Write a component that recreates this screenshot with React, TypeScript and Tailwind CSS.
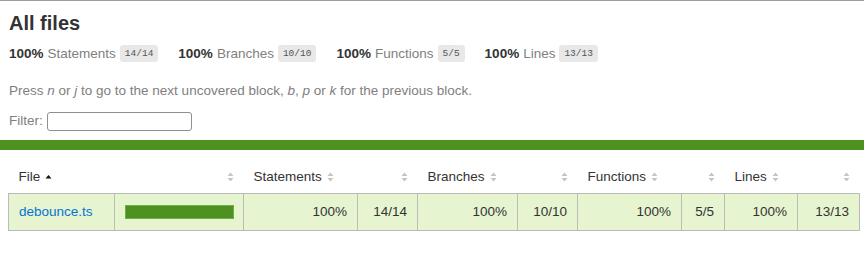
import React from "react";

const sans = "font-['Helvetica_Neue',Helvetica,'Liberation_Sans',Arial,sans-serif]";

interface Stat {
  label: string;
  fraction: string;
}

const stats: Stat[] = [
  { label: "Statements", fraction: "14/14" },
  { label: "Branches", fraction: "10/10" },
  { label: "Functions", fraction: "5/5" },
  { label: "Lines", fraction: "13/13" },
];

/** Light gray double arrow used for unsorted columns. */
function Sorter() {
  return (
    <svg width="7" height="10" viewBox="0 0 7 10" className="ml-[5px] inline-block align-[-1px]">
      <path d="M0.5 4 L3.5 0.5 L6.5 4 Z" fill="#c4c4c4" />
      <path d="M0.5 6 L3.5 9.5 L6.5 6 Z" fill="#c4c4c4" />
    </svg>
  );
}

/** Black up arrow for the sorted column. */
function SortedAsc() {
  return (
    <svg width="7" height="10" viewBox="0 0 7 10" className="ml-[5px] inline-block align-[-1px]">
      <path d="M0.5 6.5 L3.5 3 L6.5 6.5 Z" fill="#111" />
    </svg>
  );
}

function Fraction({ children }: { children: React.ReactNode }) {
  return (
    <span className="ml-[4px] inline-flex h-[17px] items-center rounded-[3px] bg-[#e8e8e8] px-[5px] font-['Liberation_Mono',Menlo,monospace] text-[9.5px] text-[#555]">
      {children}
    </span>
  );
}

export default function App() {
  const th = "h-[32px] px-[10px] text-left align-middle font-normal whitespace-nowrap";
  const td = "h-[37px] border-r border-[#bbb] px-[10px] align-middle";

  return (
    <div className={`${sans} min-h-screen border-t border-[#9c9c9c] bg-white text-[13.5px] text-[#333]`}>
      <div className="px-[9px] pt-[11px]">
        <h1 className="text-[20px] leading-[23px] font-bold">All files</h1>

        <div className="mt-[10px] flex items-center leading-[17px]">
          {stats.map((s) => (
            <div key={s.label} className="flex items-center pr-[20px]">
              <span className="font-bold">100%</span>
              <span className="ml-[4px] text-[#808080]">{s.label}</span>
              <Fraction>{s.fraction}</Fraction>
            </div>
          ))}
        </div>

        <p className="mt-[20px] leading-[17px] text-[#808080]">
          Press <em>n</em> or <em>j</em> to go to the next uncovered block, <em>b</em>, <em>p</em> or{" "}
          <em>k</em> for the previous block.
        </p>

        <div className="mt-[12px] flex items-center text-[#808080]">
          <span>Filter:</span>
          <input
            type="search"
            className="ml-[4px] h-[19px] w-[145px] rounded-[3px] border border-[#8f8f8f] bg-white px-1 text-[13px] outline-none"
          />
        </div>
      </div>

      <div className="mt-[9px] h-[10px] bg-[#4d9221]" />

      <div className="pl-[8px] pt-[11px]">
        <table className="w-[851px] table-fixed border-collapse">
          <thead>
            <tr className="border-b border-[#bbb]">
              <th className={`${th} w-[106px]`}>
                File
                <SortedAsc />
              </th>
              <th className={`${th} w-[129px] text-right`}>
                <Sorter />
              </th>
              <th className={`${th} w-[114px]`}>
                Statements
                <Sorter />
              </th>
              <th className={`${th} w-[60px] text-right`}>
                <Sorter />
              </th>
              <th className={`${th} w-[100px]`}>
                Branches
                <Sorter />
              </th>
              <th className={`${th} w-[60px] text-right`}>
                <Sorter />
              </th>
              <th className={`${th} w-[104px]`}>
                Functions
                <Sorter />
              </th>
              <th className={`${th} w-[43px] text-right`}>
                <Sorter />
              </th>
              <th className={`${th} w-[73px]`}>
                Lines
                <Sorter />
              </th>
              <th className={`${th} w-[62px] text-right`}>
                <Sorter />
              </th>
            </tr>
          </thead>
          <tbody className="border border-[#bbb]">
            <tr className="bg-[#e6f5d0]">
              <td className={`${td} whitespace-nowrap`}>
                <a href="#" className="text-[#0074d9] no-underline hover:underline">
                  debounce.ts
                </a>
              </td>
              <td className={td}>
                <div className="h-[14px] w-[109px] border border-[#6fae47] bg-[#4d9221]" />
              </td>
              <td className={`${td} text-right`}>100%</td>
              <td className={`${td} text-right`}>14/14</td>
              <td className={`${td} text-right`}>100%</td>
              <td className={`${td} text-right`}>10/10</td>
              <td className={`${td} text-right`}>100%</td>
              <td className={`${td} text-right`}>5/5</td>
              <td className={`${td} text-right`}>100%</td>
              <td className={`${td} border-r-0 text-right`}>13/13</td>
            </tr>
          </tbody>
        </table>
      </div>
    </div>
  );
}
